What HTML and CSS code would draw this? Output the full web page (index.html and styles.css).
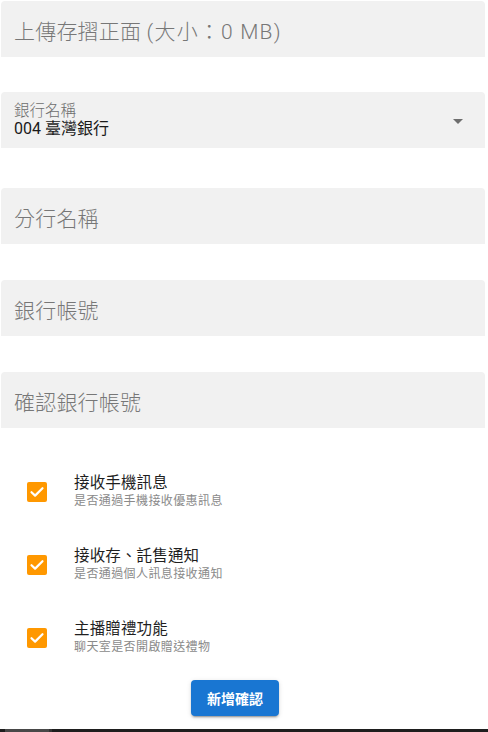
FILE: index.html
```html
<!DOCTYPE html>
<html lang="zh-Hant">
<head>
<meta charset="utf-8">
<link rel="stylesheet" href="styles.css">
</head>
<body>
<div class="page">
  <div class="form">
    <div class="field"><span class="placeholder">上傳存摺正面 <span class="latin">(大小：0 MB)</span></span></div>
    <div class="field select">
      <div class="select-text">
        <span class="small-label">銀行名稱</span>
        <span class="value">004 臺灣銀行</span>
      </div>
      <svg class="arrow" width="10" height="5" viewBox="0 0 10 5"><path d="M0 0h10L5 5z" fill="#6e6e6e"/></svg>
    </div>
    <div class="field"><span class="placeholder">分行名稱</span></div>
    <div class="field"><span class="placeholder">銀行帳號</span></div>
    <div class="field"><span class="placeholder">確認銀行帳號</span></div>
  </div>

  <div class="options">
    <div class="option">
      <span class="check"><svg width="20" height="20" viewBox="0 0 20 20"><path d="M4.5 10.2l3.6 3.4 7.4-7.4" fill="none" stroke="#fff" stroke-width="2.2" stroke-linecap="round" stroke-linejoin="round"/></svg></span>
      <div class="option-text">
        <span class="option-title">接收手機訊息</span>
        <span class="option-sub">是否通過手機接收優惠訊息</span>
      </div>
    </div>
    <div class="option">
      <span class="check"><svg width="20" height="20" viewBox="0 0 20 20"><path d="M4.5 10.2l3.6 3.4 7.4-7.4" fill="none" stroke="#fff" stroke-width="2.2" stroke-linecap="round" stroke-linejoin="round"/></svg></span>
      <div class="option-text">
        <span class="option-title">接收存、託售通知</span>
        <span class="option-sub">是否通過個人訊息接收通知</span>
      </div>
    </div>
    <div class="option">
      <span class="check"><svg width="20" height="20" viewBox="0 0 20 20"><path d="M4.5 10.2l3.6 3.4 7.4-7.4" fill="none" stroke="#fff" stroke-width="2.2" stroke-linecap="round" stroke-linejoin="round"/></svg></span>
      <div class="option-text">
        <span class="option-title">主播贈禮功能</span>
        <span class="option-sub">聊天室是否開啟贈送禮物</span>
      </div>
    </div>
  </div>

  <div class="actions">
    <button class="submit">新增確認</button>
  </div>
</div>
<div class="scrollbar"><div class="thumb"></div><div class="thumb-end"></div></div>
</body>
</html>
```
FILE: styles.css
```css
* { box-sizing: border-box; }
html, body { margin: 0; padding: 0; }
body {
  width: 488px;
  height: 732px;
  overflow: hidden;
  background: #fff;
  font-family: Roboto, "Noto Sans CJK TC", sans-serif;
  position: relative;
}
.page {
  padding: 1px 3px 0 1px;
}
.form {
  display: flex;
  flex-direction: column;
  gap: 36px;
}
.field {
  height: 56px;
  background: #f1f1f1;
  border-radius: 4px 4px 0 0;
  display: flex;
  align-items: center;
  padding: 6px 13px 0 13px;
}
.field.select {
  margin-bottom: 4px;
  margin-top: -1px;
}
.placeholder {
  font-size: 21px;
  font-weight: 300;
  letter-spacing: 0.2px;
  color: #777;
  line-height: 1;
  white-space: nowrap;
}
.latin {
  letter-spacing: 1.2px;
}
.select {
  justify-content: space-between;
  padding: 0 22px 0 13px;
}
.select-text {
  display: flex;
  flex-direction: column;
  padding-top: 1px;
}
.small-label {
  font-size: 15.5px;
  font-weight: 300;
  color: #6e6e6e;
  line-height: 16px;
}
.value {
  font-size: 16px;
  color: #1a1a1a;
  line-height: 19px;
}
.arrow { display: block; margin-top: 2px; }
.options {
  margin-top: 44px;
  display: flex;
  flex-direction: column;
  gap: 37px;
}
.option {
  display: flex;
  align-items: center;
  gap: 27px;
  padding-left: 26px;
}
.check {
  width: 20px;
  height: 20px;
  background: #ff9800;
  border-radius: 2px;
  display: flex;
  margin-top: 4px;
}
.option-text {
  display: flex;
  flex-direction: column;
}
.option-title {
  font-size: 15.5px;
  color: #1f1f1f;
  line-height: 22px;
  letter-spacing: 0.15px;
}
.option-sub {
  font-size: 12px;
  letter-spacing: 0.4px;
  color: #8a8a8a;
  line-height: 14px;
}
.actions {
  display: flex;
  padding-left: 190px;
  margin-top: 26px;
}
.submit {
  width: 88px;
  height: 36px;
  border: 0;
  border-radius: 4px;
  background: #1976d2;
  color: #fff;
  font-family: Roboto, "Noto Sans CJK TC", sans-serif;
  font-weight: 700;
  font-size: 14px;
  box-shadow: 0 3px 1px -2px rgba(0,0,0,.2), 0 2px 2px 0 rgba(0,0,0,.14), 0 1px 5px 0 rgba(0,0,0,.12);
}
.scrollbar {
  position: absolute;
  left: 0;
  right: 0;
  bottom: 0;
  height: 3px;
  background: #1e1e1e;
  display: flex;
}
.thumb {
  margin-left: 5px;
  width: 44px;
  background: #484848;
}
.thumb-end {
  width: 3px;
  background: #333;
}
```
